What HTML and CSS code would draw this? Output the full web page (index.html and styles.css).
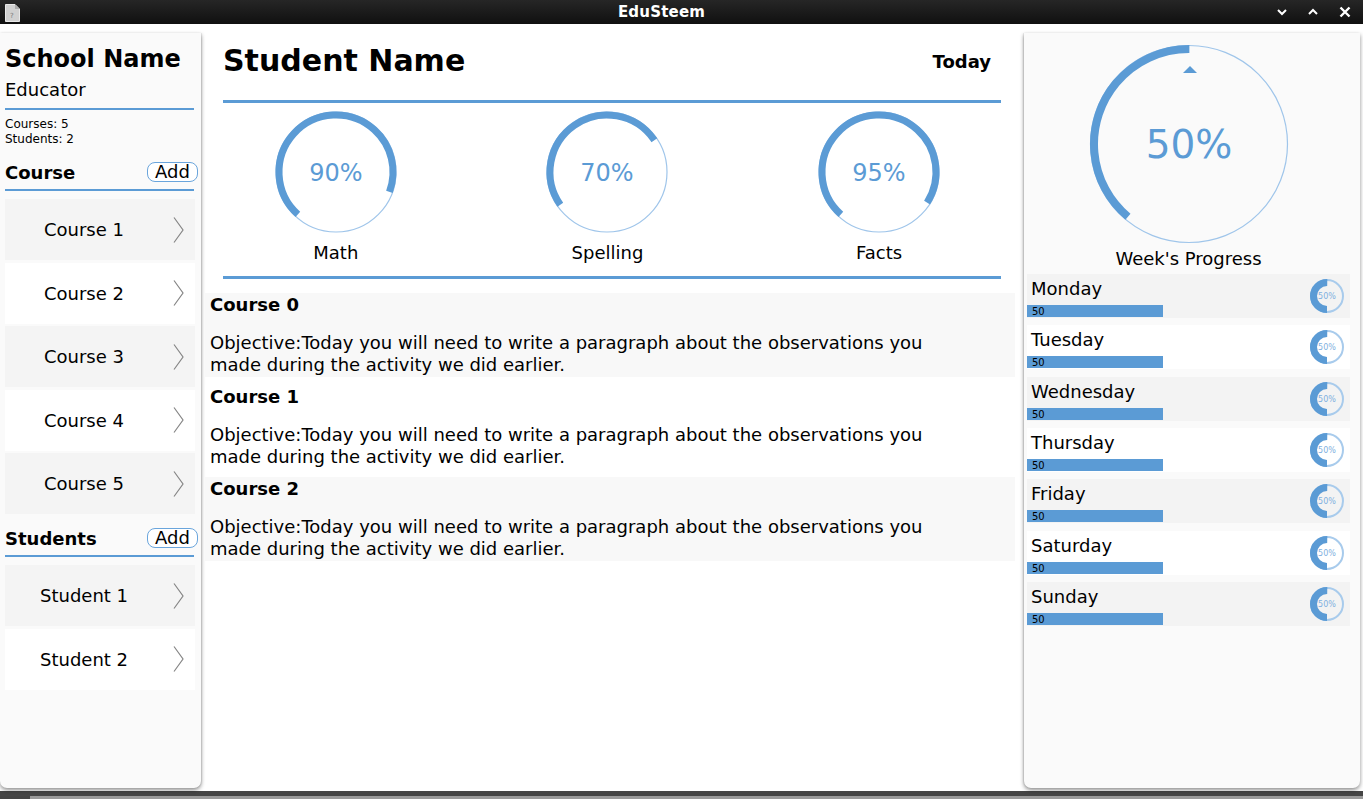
FILE: index.html
```html
<!DOCTYPE html>
<html>
<head>
<meta charset="utf-8">
<title>EduSteem</title>
<link rel="stylesheet" href="styles.css">
</head>
<body>
<div class="titlebar">
  <div class="tb-left">
    <svg class="doc-icon" width="15" height="18" viewBox="0 0 15 18">
      <path d="M0.5 0.5 H10 L14.5 5 V17.5 H0.5 Z" fill="#d0d0d0" stroke="#e8e8e8" stroke-width="1"/>
      <path d="M10 0.5 V5 H14.5" fill="#aaa"/>
      <text x="5" y="14" font-size="7" fill="#777" font-family="DejaVu Sans">?</text>
    </svg>
  </div>
  <div class="tb-title">EduSteem</div>
  <div class="tb-right">
    <svg width="10" height="8" viewBox="0 0 10 8"><path d="M1 2 L5 6 L9 2" fill="none" stroke="#fff" stroke-width="2"/></svg>
    <svg width="10" height="8" viewBox="0 0 10 8"><path d="M1 6 L5 2 L9 6" fill="none" stroke="#fff" stroke-width="2"/></svg>
    <svg width="12" height="12" viewBox="0 0 12 12"><path d="M1.5 1.5 L10.5 10.5 M10.5 1.5 L1.5 10.5" fill="none" stroke="#fff" stroke-width="2.4"/></svg>
  </div>
</div>

<div class="app">
  <aside class="left">
    <div class="school">School Name</div>
    <div class="role">Educator</div>
    <div class="rule rule-left"></div>
    <div class="stats">Courses: 5<br>Students: 2</div>

    <div class="sec-head"><span class="sec-title">Course</span><span class="add-btn">Add</span></div>
    <div class="rule rule-left rule-sec"></div>
    <div class="list">
      <div class="item alt"><span class="item-text">Course 1</span><svg class="chev" width="11" height="26" viewBox="0 0 11 26"><path d="M1 0.5 L10 13 L1 25.5" fill="none" stroke="#858585" stroke-width="1.2"/></svg></div>
      <div class="item"><span class="item-text">Course 2</span><svg class="chev" width="11" height="26" viewBox="0 0 11 26"><path d="M1 0.5 L10 13 L1 25.5" fill="none" stroke="#858585" stroke-width="1.2"/></svg></div>
      <div class="item alt"><span class="item-text">Course 3</span><svg class="chev" width="11" height="26" viewBox="0 0 11 26"><path d="M1 0.5 L10 13 L1 25.5" fill="none" stroke="#858585" stroke-width="1.2"/></svg></div>
      <div class="item"><span class="item-text">Course 4</span><svg class="chev" width="11" height="26" viewBox="0 0 11 26"><path d="M1 0.5 L10 13 L1 25.5" fill="none" stroke="#858585" stroke-width="1.2"/></svg></div>
      <div class="item alt"><span class="item-text">Course 5</span><svg class="chev" width="11" height="26" viewBox="0 0 11 26"><path d="M1 0.5 L10 13 L1 25.5" fill="none" stroke="#858585" stroke-width="1.2"/></svg></div>
    </div>

    <div class="sec-head sec-students"><span class="sec-title">Students</span><span class="add-btn">Add</span></div>
    <div class="rule rule-left rule-sec"></div>
    <div class="list">
      <div class="item alt"><span class="item-text">Student 1</span><svg class="chev" width="11" height="26" viewBox="0 0 11 26"><path d="M1 0.5 L10 13 L1 25.5" fill="none" stroke="#858585" stroke-width="1.2"/></svg></div>
      <div class="item"><span class="item-text">Student 2</span><svg class="chev" width="11" height="26" viewBox="0 0 11 26"><path d="M1 0.5 L10 13 L1 25.5" fill="none" stroke="#858585" stroke-width="1.2"/></svg></div>
    </div>
  </aside>

  <main class="main">
    <div class="main-head">
      <h1 class="student">Student Name</h1>
      <span class="today">Today</span>
    </div>
    <div class="rule rule-main"></div>

    <div class="gauges">
      <div class="gauge">
        <svg width="130" height="130" viewBox="0 0 130 130">
          <circle cx="65" cy="65" r="60" fill="none" stroke="#9fc5ea" stroke-width="1.2"/>
          <circle cx="65" cy="65" r="57" fill="none" stroke="#5b9bd5" stroke-width="7" stroke-dasharray="246.7 400" transform="rotate(132 65 65)"/>
          <text x="65" y="74" text-anchor="middle" class="g-val">90%</text>
        </svg>
        <div class="g-label">Math</div>
      </div>
      <div class="gauge">
        <svg width="130" height="130" viewBox="0 0 130 130">
          <circle cx="65" cy="65" r="60" fill="none" stroke="#9fc5ea" stroke-width="1.2"/>
          <circle cx="65" cy="65" r="57" fill="none" stroke="#5b9bd5" stroke-width="7" stroke-dasharray="180 400" transform="rotate(145 65 65)"/>
          <text x="65" y="74" text-anchor="middle" class="g-val">70%</text>
        </svg>
        <div class="g-label">Spelling</div>
      </div>
      <div class="gauge">
        <svg width="130" height="130" viewBox="0 0 130 130">
          <circle cx="65" cy="65" r="60" fill="none" stroke="#9fc5ea" stroke-width="1.2"/>
          <circle cx="65" cy="65" r="57" fill="none" stroke="#5b9bd5" stroke-width="7" stroke-dasharray="258.7 400" transform="rotate(132 65 65)"/>
          <text x="65" y="74" text-anchor="middle" class="g-val">95%</text>
        </svg>
        <div class="g-label">Facts</div>
      </div>
    </div>
    <div class="rule rule-main rule-main2"></div>

    <div class="courses">
      <div class="course alt">
        <div class="c-title">Course 0</div>
        <div class="c-obj">Objective:Today you will need to write a paragraph about the observations you made during the activity we did earlier.</div>
      </div>
      <div class="course">
        <div class="c-title">Course 1</div>
        <div class="c-obj">Objective:Today you will need to write a paragraph about the observations you made during the activity we did earlier.</div>
      </div>
      <div class="course alt">
        <div class="c-title">Course 2</div>
        <div class="c-obj">Objective:Today you will need to write a paragraph about the observations you made during the activity we did earlier.</div>
      </div>
    </div>
  </main>

  <aside class="right">
    <div class="week">
      <svg width="200" height="200" viewBox="0 0 200 200">
        <circle cx="100" cy="100" r="98.5" fill="none" stroke="#9fc5ea" stroke-width="1.2"/>
        <circle cx="100" cy="100" r="95" fill="none" stroke="#5b9bd5" stroke-width="8" stroke-dasharray="232.1 700" transform="rotate(130 100 100)"/>
        <polygon points="94,29 108,29 101,22" fill="#5b9bd5"/>
        <text x="100" y="114" text-anchor="middle" class="w-val">50%</text>
      </svg>
      <div class="w-label">Week's Progress</div>
    </div>
    <div class="days">
      <div class="day alt"><div class="d-left"><div class="d-name">Monday</div><div class="bar">50</div></div><svg class="mini" width="36" height="36" viewBox="0 0 36 36"><circle cx="18" cy="18" r="16" fill="none" stroke="#a8cbec" stroke-width="2"/><circle cx="18" cy="18" r="13.5" fill="none" stroke="#5b9bd5" stroke-width="7" stroke-dasharray="42.4 100" transform="rotate(90 18 18)"/><text x="18" y="21" text-anchor="middle" class="m-val">50%</text></svg></div>
      <div class="day"><div class="d-left"><div class="d-name">Tuesday</div><div class="bar">50</div></div><svg class="mini" width="36" height="36" viewBox="0 0 36 36"><circle cx="18" cy="18" r="16" fill="none" stroke="#a8cbec" stroke-width="2"/><circle cx="18" cy="18" r="13.5" fill="none" stroke="#5b9bd5" stroke-width="7" stroke-dasharray="42.4 100" transform="rotate(90 18 18)"/><text x="18" y="21" text-anchor="middle" class="m-val">50%</text></svg></div>
      <div class="day alt"><div class="d-left"><div class="d-name">Wednesday</div><div class="bar">50</div></div><svg class="mini" width="36" height="36" viewBox="0 0 36 36"><circle cx="18" cy="18" r="16" fill="none" stroke="#a8cbec" stroke-width="2"/><circle cx="18" cy="18" r="13.5" fill="none" stroke="#5b9bd5" stroke-width="7" stroke-dasharray="42.4 100" transform="rotate(90 18 18)"/><text x="18" y="21" text-anchor="middle" class="m-val">50%</text></svg></div>
      <div class="day"><div class="d-left"><div class="d-name">Thursday</div><div class="bar">50</div></div><svg class="mini" width="36" height="36" viewBox="0 0 36 36"><circle cx="18" cy="18" r="16" fill="none" stroke="#a8cbec" stroke-width="2"/><circle cx="18" cy="18" r="13.5" fill="none" stroke="#5b9bd5" stroke-width="7" stroke-dasharray="42.4 100" transform="rotate(90 18 18)"/><text x="18" y="21" text-anchor="middle" class="m-val">50%</text></svg></div>
      <div class="day alt"><div class="d-left"><div class="d-name">Friday</div><div class="bar">50</div></div><svg class="mini" width="36" height="36" viewBox="0 0 36 36"><circle cx="18" cy="18" r="16" fill="none" stroke="#a8cbec" stroke-width="2"/><circle cx="18" cy="18" r="13.5" fill="none" stroke="#5b9bd5" stroke-width="7" stroke-dasharray="42.4 100" transform="rotate(90 18 18)"/><text x="18" y="21" text-anchor="middle" class="m-val">50%</text></svg></div>
      <div class="day"><div class="d-left"><div class="d-name">Saturday</div><div class="bar">50</div></div><svg class="mini" width="36" height="36" viewBox="0 0 36 36"><circle cx="18" cy="18" r="16" fill="none" stroke="#a8cbec" stroke-width="2"/><circle cx="18" cy="18" r="13.5" fill="none" stroke="#5b9bd5" stroke-width="7" stroke-dasharray="42.4 100" transform="rotate(90 18 18)"/><text x="18" y="21" text-anchor="middle" class="m-val">50%</text></svg></div>
      <div class="day alt"><div class="d-left"><div class="d-name">Sunday</div><div class="bar">50</div></div><svg class="mini" width="36" height="36" viewBox="0 0 36 36"><circle cx="18" cy="18" r="16" fill="none" stroke="#a8cbec" stroke-width="2"/><circle cx="18" cy="18" r="13.5" fill="none" stroke="#5b9bd5" stroke-width="7" stroke-dasharray="42.4 100" transform="rotate(90 18 18)"/><text x="18" y="21" text-anchor="middle" class="m-val">50%</text></svg></div>
    </div>
  </aside>
</div>

<div class="taskbar"><div class="tb-a"></div><div class="tb-b"></div></div>
</body>
</html>
```

FILE: styles.css
```css
* { box-sizing: border-box; }

html, body {
  margin: 0;
  padding: 0;
}

body {
  width: 1363px;
  height: 799px;
  overflow: hidden;
  background: #ffffff;
  font-family: "DejaVu Sans", "Noto Sans", sans-serif;
  color: #000;
}

/* ---------- title bar ---------- */
.titlebar {
  height: 24px;
  background: linear-gradient(#262626, #101010);
  display: grid;
  grid-template-columns: 1fr auto 1fr;
  align-items: center;
  padding-right: 40px;
  color: #fff;
}

.tb-left {
  padding-left: 5px;
  display: flex;
  align-items: center;
}

.doc-icon { display: block; margin-top: 1px; }

.tb-title {
  font-size: 15px;
  font-weight: bold;
  letter-spacing: 0.2px;
}

.tb-right {
  display: flex;
  align-items: center;
  justify-content: flex-end;
  gap: 21px;
  margin-right: -28px;
}

/* ---------- app layout ---------- */
.app {
  display: flex;
  height: 767px;
}

.left {
  width: 201px;
  flex: none;
  margin-top: 9px;
  height: 755px;
  background: #fafafa;
  border-radius: 0 0 7px 7px;
  box-shadow: 0 2px 4px rgba(0, 0, 0, 0.45), 1px 0 1px rgba(0, 0, 0, 0.08);
  padding: 12px 6px 0 5px;
}

.school {
  font-size: 24px;
  font-weight: bold;
  line-height: 28px;
}

.role {
  margin-top: 6px;
  font-size: 18px;
  line-height: 22px;
}

.rule {
  height: 2px;
  background: #5b9bd5;
}

.rule-left {
  margin-top: 7px;
  width: 189px;
}

.stats {
  margin-top: 7px;
  font-size: 12px;
  line-height: 15px;
}

.sec-head {
  margin-top: 14px;
  height: 22px;
  display: flex;
  align-items: center;
  justify-content: space-between;
  margin-right: -3px;
}

.sec-students { margin-top: 13px; }

.sec-title {
  font-size: 18px;
  font-weight: bold;
}

.add-btn {
  width: 51px;
  height: 20px;
  border: 1px solid #6aa5dc;
  border-radius: 8px;
  background: #fff;
  font-size: 18px;
  line-height: 18px;
  text-align: center;
}

.rule-sec { margin-top: 6px; }

.list {
  margin-top: 8px;
  display: flex;
  flex-direction: column;
  gap: 2.5px;
}

.item {
  height: 61px;
  width: 190px;
  display: flex;
  align-items: center;
  background: #ffffff;
}

.item.alt { background: #f4f4f4; }

.item-text {
  flex: 1;
  text-align: center;
  font-size: 18px;
  padding-right: 10px;
}

.chev {
  display: block;
  margin-right: 11px;
}

/* ---------- main ---------- */
.main {
  flex: 1;
  padding: 19px 9px 0 4px;
}

.main-head {
  margin: 0 14px 0 18px;
  height: 36px;
  display: flex;
  align-items: center;
  justify-content: space-between;
}

.student {
  margin: 0;
  font-size: 30px;
  line-height: 36px;
  font-weight: bold;
}

.today {
  font-size: 18px;
  font-weight: bold;
  margin-right: 10px;
}

.rule-main {
  height: 3px;
  margin: 21px 14px 0 18px;
}

.gauges {
  margin: 4px 0 0 -5px;
  display: grid;
  grid-template-columns: repeat(3, 1fr);
}

.gauge {
  display: flex;
  flex-direction: column;
  align-items: center;
}

.gauge svg { display: block; }

.g-val {
  font-family: "DejaVu Sans", sans-serif;
  font-size: 24px;
  fill: #5b9bd5;
}

.g-label {
  margin-top: 5px;
  font-size: 18px;
  line-height: 22px;
}

.rule-main2 { margin-top: 12px; }

.courses {
  margin-top: 14px;
  display: flex;
  flex-direction: column;
  gap: 8px;
}

.course {
  height: 84px;
  padding: 1px 5px 0 5px;
  background: #ffffff;
}

.course.alt { background: #f8f8f8; }

.c-title {
  font-size: 18px;
  line-height: 22px;
  font-weight: bold;
}

.c-obj {
  margin-top: 16px;
  font-size: 18px;
  line-height: 22px;
  max-width: 750px;
}

/* ---------- right ---------- */
.right {
  width: 336px;
  flex: none;
  margin: 9px 3px 0 0;
  height: 755px;
  background: #fafafa;
  border-radius: 0 0 7px 7px;
  box-shadow: 0 2px 4px rgba(0, 0, 0, 0.45), -1px 0 1px rgba(0, 0, 0, 0.08);
  padding: 11px 10px 0 3px;
}

.week {
  display: flex;
  flex-direction: column;
  align-items: center;
}

.week svg { display: block; }

.w-val {
  font-family: "DejaVu Sans", sans-serif;
  font-size: 39px;
  fill: #5b9bd5;
}

.w-label {
  margin-top: 4px;
  font-size: 18px;
  line-height: 22px;
}

.days {
  margin-top: 4px;
  display: flex;
  flex-direction: column;
  gap: 7.33px;
}

.day {
  height: 44px;
  display: flex;
  align-items: center;
  justify-content: space-between;
  background: #ffffff;
  padding-right: 5px;
}

.day.alt { background: #f3f3f3; }

.d-left {
  align-self: flex-start;
  padding-top: 4px;
}

.d-name {
  font-size: 18px;
  line-height: 22px;
  padding-left: 4px;
}

.bar {
  margin-top: 5px;
  width: 136px;
  height: 12px;
  background: #5b9bd5;
  font-size: 10px;
  line-height: 13px;
  padding-left: 5px;
}

.mini { display: block; }

.m-val {
  font-family: "DejaVu Sans", sans-serif;
  font-size: 8px;
  fill: #7fb0e0;
}

/* ---------- taskbar ---------- */
.taskbar {
  height: 8px;
  background: #444;
}

.tb-a {
  height: 5px;
  background: #454545;
}

.tb-b {
  height: 3px;
  margin-left: 30px;
  background: #9a9a9a;
}
```
